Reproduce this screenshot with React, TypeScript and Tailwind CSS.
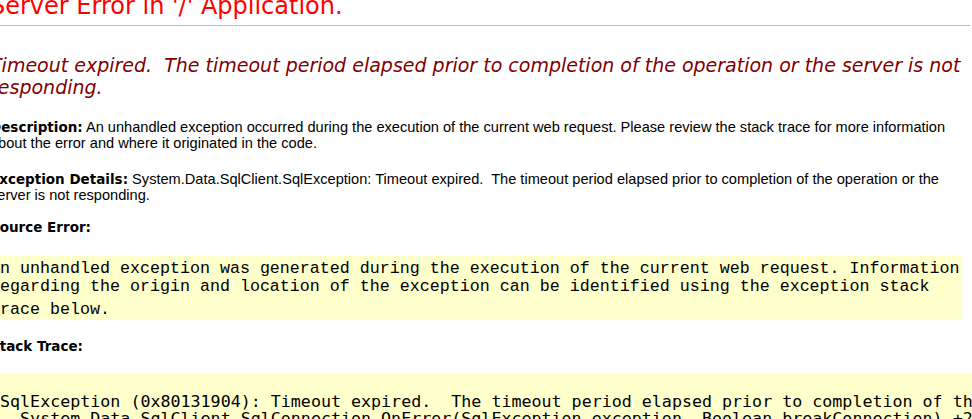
const verdana = { fontFamily: '"DejaVu Sans", Verdana, sans-serif' };

function Label({ children }: { children: string }) {
  return (
    <b className="text-[13.5px] font-bold text-black" style={verdana}>
      {children}
    </b>
  );
}

export default function App() {
  return (
    <div className="h-[419px] w-[972px] overflow-hidden bg-white">
      <div className="ml-[-10px] flex flex-col">
        {/* Page heading */}
        <h1
          className="mt-[-8px] h-[28px] whitespace-nowrap text-[24px] font-normal leading-[28px] text-[#ff0000]"
          style={verdana}
        >
          Server Error in '/' Application.
        </h1>
        <div className="mt-[5px] h-px w-[980px] bg-[#c0c0c0]" />

        {/* Exception message */}
        <h2
          className="mt-[28px] whitespace-pre text-[19px] font-normal italic leading-[22px] text-[#800000]"
          style={verdana}
        >
          <div>Timeout expired.  The timeout period elapsed prior to completion of the operation or the server is not</div>
          <div>responding.</div>
        </h2>

        <div
          className="whitespace-pre text-[14.6px] leading-[16px] text-black"
          style={{ fontFamily: '"Liberation Sans", Arial, Helvetica, sans-serif' }}
        >
          <div className="mt-[21px] h-[16px]">
            <Label>Description:</Label> An unhandled exception occurred during the execution of the current web request. Please review the stack trace for more information
          </div>
          <div className="h-[16px]">about the error and where it originated in the code.</div>

          <div className="mt-[20px] h-[16px]">
            <Label>Exception Details:</Label> System.Data.SqlClient.SqlException: Timeout expired.  The timeout period elapsed prior to completion of the operation or the
          </div>
          <div className="h-[16px]">server is not responding.</div>

          <div className="mt-[16px] h-[16px]">
            <Label>Source Error:</Label>
          </div>

          {/* Source error block */}
          <div
            className="mt-[21px] ml-[-4px] w-[975px] bg-[#ffffcc] pt-[4px] pb-[1px] pl-[4px] text-[16.67px] text-black"
            style={{ fontFamily: '"Liberation Mono", "Courier New", monospace' }}
          >
            <div className="h-[18px] leading-[18px]">An unhandled exception was generated during the execution of the current web request. Information</div>
            <div className="h-[23px] leading-[18px]">regarding the origin and location of the exception can be identified using the exception stack</div>
            <div className="h-[18px] leading-[18px]">trace below.</div>
          </div>

          <div className="mt-[18px] h-[16px]">
            <Label>Stack Trace:</Label>
          </div>

          {/* Stack trace block */}
          <div
            className="mt-[19px] ml-[-4px] w-[1400px] bg-[#ffffcc] pt-[20px] pl-[4px] text-[16.67px] leading-[17px] text-black"
            style={{ fontFamily: '"DejaVu Sans Mono", "Lucida Console", monospace' }}
          >
            <div className="h-[17px]">[SqlException (0x80131904): Timeout expired.  The timeout period elapsed prior to completion of the operation or the server is not responding.]</div>
            <div className="h-[17px]">   System.Data.SqlClient.SqlConnection.OnError(SqlException exception, Boolean breakConnection) +2073550</div>
          </div>
        </div>
      </div>
    </div>
  );
}
